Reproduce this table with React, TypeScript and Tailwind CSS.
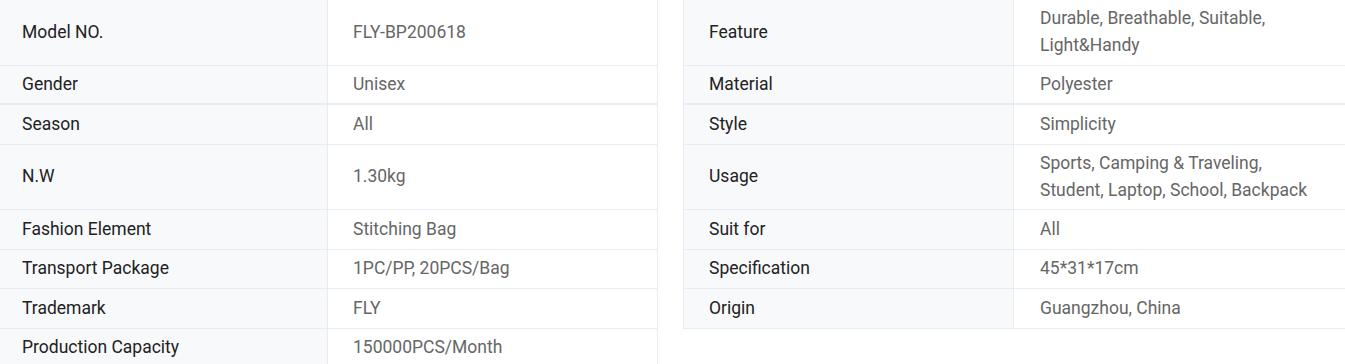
import React from 'react';

const specs: [string, string][] = [
  ['Model NO.', 'FLY-BP200618'],
  ['Feature', 'Durable, Breathable, Suitable, Light&Handy'],
  ['Gender', 'Unisex'],
  ['Material', 'Polyester'],
  ['Season', 'All'],
  ['Style', 'Simplicity'],
  ['N.W', '1.30kg'],
  ['Usage', 'Sports, Camping & Traveling, Student, Laptop, School, Backpack'],
  ['Fashion Element', 'Stitching Bag'],
  ['Suit for', 'All'],
  ['Transport Package', '1PC/PP, 20PCS/Bag'],
  ['Specification', '45*31*17cm'],
  ['Trademark', 'FLY'],
  ['Origin', 'Guangzhou, China'],
  ['Production Capacity', '150000PCS/Month'],
];

function App() {
  return (
    <div className="w-[1345px] h-[364px] overflow-hidden bg-white" style={{ fontFamily: 'Roboto, "Liberation Sans", sans-serif' }}>
      <div className="grid grid-cols-[658px_662px] gap-x-[25px] text-[17.5px] leading-[27px]">
        {specs.map(([label, value], i) => (
          <div
            key={label}
            className={`flex min-h-[39.5px] border-[#e8ecf2] ${i % 2 === 1 ? 'border-l' : ''} ${
              i === 2 || i === 3 ? 'border-b-2' : 'border-b'
            } ${i % 2 === 0 ? 'border-r' : ''}`}
          >
            <div
              className={`shrink-0 flex items-center bg-[#f8f9fb] border-r border-[#e8ecf2] py-[5.25px] text-[#222] ${
                i % 2 === 0 ? 'w-[328px] pl-[22px]' : 'w-[330px] pl-[25px]'
              }`}
            >
              {label}
            </div>
            <div
              className={`flex-1 flex items-center py-[5.25px] text-[#666] ${
                i % 2 === 0 ? 'pl-[25px]' : 'pl-[26px] pr-[30px]'
              }`}
            >
              {value}
            </div>
          </div>
        ))}
      </div>
    </div>
  );
}

export default App;
